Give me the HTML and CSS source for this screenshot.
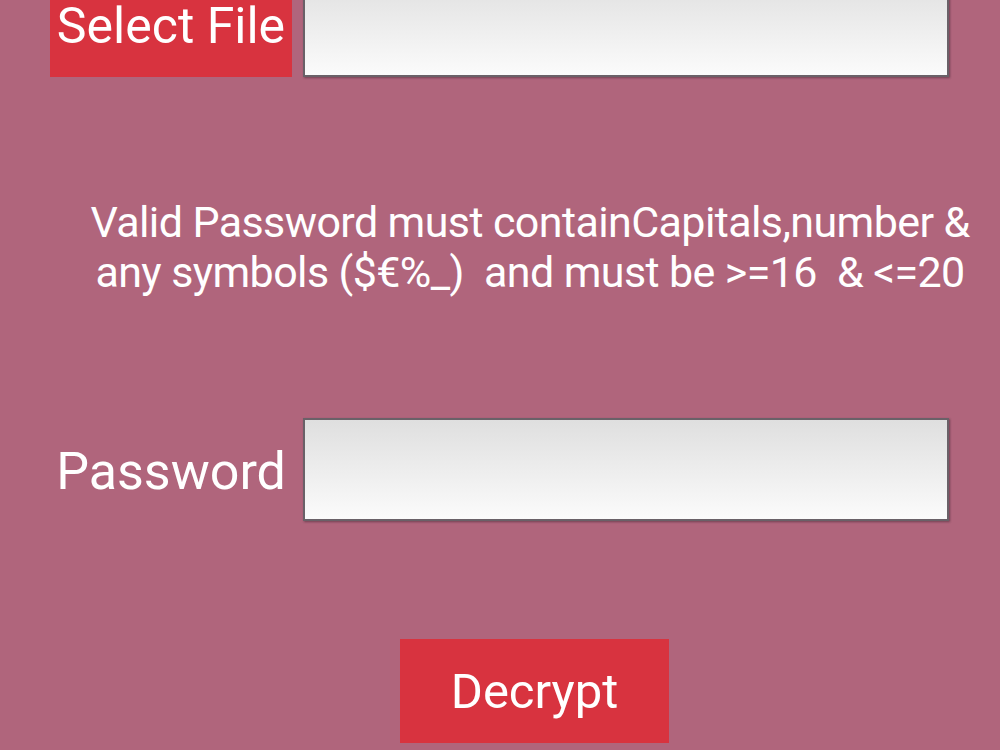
FILE: index.html
```html
<!DOCTYPE html>
<html lang="en">
<head>
<meta charset="utf-8">
<title>Decrypt</title>
<link rel="stylesheet" href="styles.css">
</head>
<body>
<main class="screen">
  <div class="row row-file">
    <button class="btn btn-select" type="button">Select File</button>
    <div class="field"></div>
  </div>
  <p class="hint"><span class="hint-line">Valid Password must containCapitals,number &amp;</span><span class="hint-line">any symbols ($€%_)  and must be &gt;=16  &amp; &lt;=20</span></p>
  <div class="row row-pass">
    <label class="label">Password</label>
    <div class="field"></div>
  </div>
  <div class="actions">
    <button class="btn btn-decrypt" type="button">Decrypt</button>
  </div>
</main>
</body>
</html>
```

FILE: styles.css
```css
html, body {
  margin: 0;
  padding: 0;
  height: 100%;
  overflow: hidden;
}
body {
  background: #b0657c;
  font-family: Roboto, "Noto Sans", "Liberation Sans", sans-serif;
  color: #ffffff;
}
.screen {
  display: flex;
  flex-direction: column;
  margin-top: -26px;
}
.row {
  display: flex;
  align-items: center;
  padding-left: 50px;
  gap: 11px;
  height: 103px;
}
.btn {
  border: none;
  margin: 0;
  padding: 0;
  background: #d8333f;
  color: #ffffff;
  font-family: Roboto, "Noto Sans", "Liberation Sans", sans-serif;
  font-size: 50px;
  font-weight: 400;
  cursor: pointer;
}
.btn-select {
  width: 242px;
  height: 103px;
  text-align: center;
}
.label {
  width: 242px;
  text-align: center;
  font-size: 52px;
  line-height: normal;
  margin-top: 4px;
}
.field {
  width: 642px;
  height: 99px;
  border: 2px solid #6a6168;
  box-shadow: 1px 1px 2px rgba(40, 20, 30, 0.45);
  background: linear-gradient(#dfdfdf, #fbfbfb);
}
.hint {
  margin: 120px 0 0 60px;
  text-align: center;
  font-size: 43px;
  line-height: 50px;
  letter-spacing: -0.6px;
}
.hint-line {
  display: block;
  white-space: pre;
}
.row-pass {
  margin-top: 121px;
}
.actions {
  display: flex;
  padding-left: 400px;
  margin-top: 118px;
}
.btn-decrypt {
  width: 269px;
  height: 104px;
  font-size: 49px;
}
```
